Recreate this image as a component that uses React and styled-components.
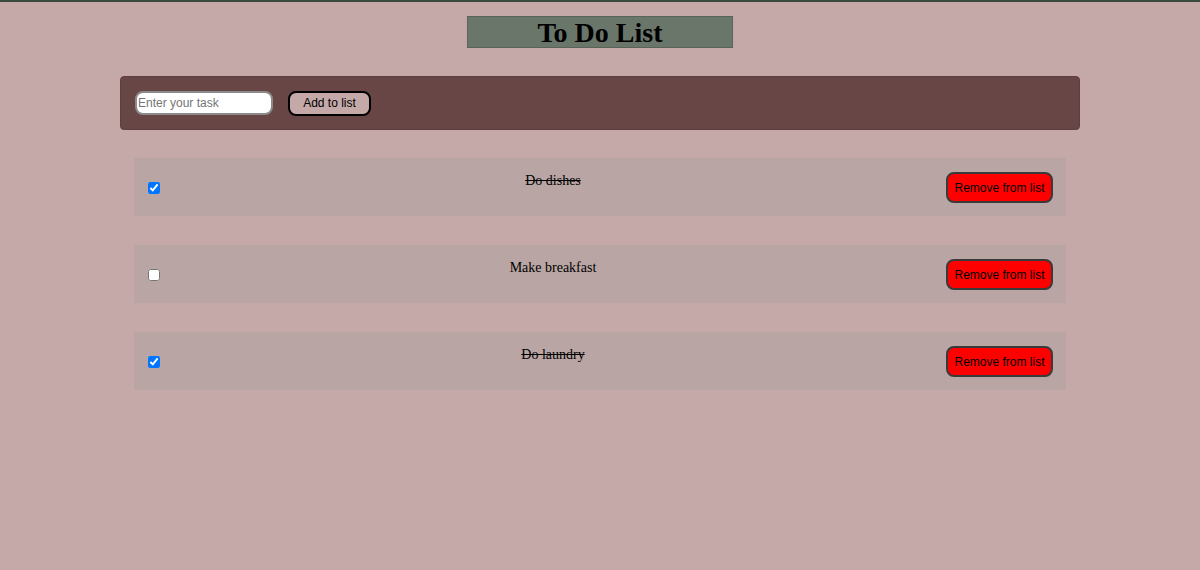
import React, { useState } from "react";
import styled, { createGlobalStyle } from "styled-components";

const GlobalStyle = createGlobalStyle`
  html, body {
    margin: 0;
    padding: 0;
    background-color: #c5a9a9;
    font-family: "Liberation Serif", "Times New Roman", serif;
  }
  body {
    border-top: 2px solid #3b4a3e;
    min-height: 566px;
  }
`;

const Page = styled.div`
  display: flex;
  flex-direction: column;
  align-items: center;
  padding-top: 14px;
`;

const Title = styled.h1`
  margin: 0;
  width: 264px;
  height: 30px;
  line-height: 31px;
  text-align: center;
  background-color: #6b766b;
  border: 1px solid #596459;
  font-size: 28px;
  font-weight: bold;
  color: #000;
`;

const Form = styled.div`
  box-sizing: border-box;
  width: 960px;
  height: 54px;
  margin-top: 28px;
  padding: 0 14px;
  display: flex;
  align-items: center;
  gap: 15px;
  background-color: #684646;
  border-radius: 4px;
  border: 1px solid #5e3e3e;
`;

const TaskInput = styled.input`
  box-sizing: border-box;
  width: 138px;
  height: 24px;
  padding: 0 1px;
  border: 2px solid #8a8a8a;
  border-radius: 8px;
  background: #fff;
  font-family: "Liberation Sans", Arial, sans-serif;
  font-size: 12px;
  &::placeholder {
    color: #757575;
  }
`;

const AddButton = styled.button`
  box-sizing: border-box;
  width: 83px;
  height: 25px;
  padding: 0;
  background-color: #c5a9a9;
  border: 2px solid #000;
  border-radius: 8px;
  font-family: "Liberation Sans", Arial, sans-serif;
  font-size: 12px;
  color: #000;
  white-space: nowrap;
  cursor: pointer;
`;

const List = styled.div`
  width: 932px;
  margin-top: 28px;
  display: flex;
  flex-direction: column;
  gap: 29px;
`;

const Item = styled.div`
  box-sizing: border-box;
  height: 58px;
  padding: 0 13px 0 14px;
  display: flex;
  align-items: center;
  justify-content: space-between;
  background-color: #b9a5a3;
`;

const Check = styled.input`
  width: 12px;
  height: 12px;
  margin: 1px 0 0 0;
  accent-color: #0075ff;
`;

const Label = styled.span`
  font-size: 14px;
  color: #000;
  margin-bottom: 13px;
  text-decoration: ${(p) => (p.$done ? "line-through" : "none")};
`;

const RemoveButton = styled.button`
  box-sizing: border-box;
  width: 107px;
  height: 31px;
  margin-top: 1px;
  padding: 0;
  background-color: #ff0000;
  border: 2px solid #3a3a3a;
  border-radius: 8px;
  font-family: "Liberation Sans", Arial, sans-serif;
  font-size: 12px;
  color: #000;
  white-space: nowrap;
  cursor: pointer;
`;

const initialTasks = [
  { id: 1, text: "Do dishes", done: true },
  { id: 2, text: "Make breakfast", done: false },
  { id: 3, text: "Do laundry", done: true },
];

export default function App() {
  const [tasks, setTasks] = useState(initialTasks);
  const [value, setValue] = useState("");

  const addTask = () => {
    if (!value.trim()) return;
    setTasks([...tasks, { id: Date.now(), text: value, done: false }]);
    setValue("");
  };

  const toggle = (id) =>
    setTasks(tasks.map((t) => (t.id === id ? { ...t, done: !t.done } : t)));

  const remove = (id) => setTasks(tasks.filter((t) => t.id !== id));

  return (
    <>
      <GlobalStyle />
      <Page>
        <Title>To Do List</Title>
        <Form>
          <TaskInput
            placeholder="Enter your task"
            value={value}
            onChange={(e) => setValue(e.target.value)}
          />
          <AddButton onClick={addTask}>Add to list</AddButton>
        </Form>
        <List>
          {tasks.map((t) => (
            <Item key={t.id}>
              <Check type="checkbox" checked={t.done} onChange={() => toggle(t.id)} />
              <Label $done={t.done}>{t.text}</Label>
              <RemoveButton onClick={() => remove(t.id)}>Remove from list</RemoveButton>
            </Item>
          ))}
        </List>
      </Page>
    </>
  );
}
